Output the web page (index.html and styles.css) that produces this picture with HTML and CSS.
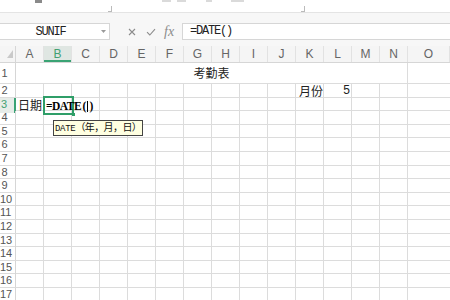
FILE: index.html
```html
<!DOCTYPE html>
<html lang="zh-CN">
<head>
    <meta charset="UTF-8">
    <title>考勤表 - 表格</title>
    <link rel="stylesheet" href="styles.css">
</head>
<body>
    <!-- bottom edge of the ribbon, mostly cut off -->
    <div class="ribbon">
        <span class="rb-mark m1"></span>
        <span class="rb-corner c1"></span>
        <span class="rb-block g1"></span>
        <span class="rb-block g2"></span>
        <span class="rb-block g3"></span>
        <span class="rb-block g4"></span>
        <span class="rb-corner c2"></span>
    </div>

    <div class="formula-bar">
        <div class="name-box">
            <span class="name-text">SUNIF</span>
            <svg class="caret" width="5" height="3" viewBox="0 0 5 3"><path d="M0 0H5L2.5 3Z" fill="#9a9a9a"/></svg>
        </div>
        <div class="fx-icons">
            <svg class="ic-x" width="8" height="8" viewBox="0 0 8 8"><path d="M1 1L7 7M7 1L1 7" stroke="#8c8c8c" stroke-width="1.1" fill="none"/></svg>
            <svg class="ic-ok" width="10" height="8" viewBox="0 0 10 8"><path d="M1 4.2L3.8 7L9 1.2" stroke="#8c8c8c" stroke-width="1.1" fill="none"/></svg>
            <span class="fx">fx</span>
        </div>
        <div class="formula-input">=DATE()</div>
    </div>

    <div class="sheet">
        <div class="col-header">
            <div class="ch corner">
                <svg width="6" height="8" viewBox="0 0 6 8"><path d="M6 0V8H0Z" fill="#c9c9c9"/></svg>
            </div>
            <div class="ch">A</div>
            <div class="ch sel">B</div>
            <div class="ch">C</div>
            <div class="ch">D</div>
            <div class="ch">E</div>
            <div class="ch">F</div>
            <div class="ch">G</div>
            <div class="ch">H</div>
            <div class="ch">I</div>
            <div class="ch">J</div>
            <div class="ch">K</div>
            <div class="ch">L</div>
            <div class="ch">M</div>
            <div class="ch">N</div>
            <div class="ch">O</div>
        </div>

        <div class="row r1">
            <div class="rh">1</div>
            <div class="merged">考勤表</div>
        </div>
        <div class="row">
            <div class="rh">2</div>
            <div class="cell col-k">月份</div>
            <div class="cell col-l num">5</div>
        </div>
        <div class="row">
            <div class="rh active">3</div>
            <div class="cell col-a">日期</div>
            <div class="cell col-b editing">
                <span class="edit-text">=DATE <span class="paren">(<span class="cursor"></span>)</span></span>
                <span class="handle"></span>
                <div class="tip"><span class="tip-fn">DATE</span>（年，月，日）</div>
            </div>
        </div>
        <div class="row"><div class="rh">4</div></div>
        <div class="row"><div class="rh">5</div></div>
        <div class="row"><div class="rh">6</div></div>
        <div class="row"><div class="rh">7</div></div>
        <div class="row"><div class="rh">8</div></div>
        <div class="row"><div class="rh">9</div></div>
        <div class="row"><div class="rh">10</div></div>
        <div class="row"><div class="rh">11</div></div>
        <div class="row"><div class="rh">12</div></div>
        <div class="row"><div class="rh">13</div></div>
        <div class="row"><div class="rh">14</div></div>
        <div class="row"><div class="rh">15</div></div>
        <div class="row"><div class="rh">16</div></div>
        <div class="row"><div class="rh">17</div></div>
    </div>
</body>
</html>
```

FILE: styles.css
```css
body{
    margin: 0;
    width: 450px;
    height: 300px;
    overflow: hidden;
    background: #fff;
    font-family: "Liberation Sans", "Noto Sans CJK SC", sans-serif;
    color: #222;
}

/* ribbon strip */
.ribbon{
    display: flex;
    align-items: flex-start;
    height: 12px;
    border-bottom: 1px solid #e4e4e4;
}
.rb-mark{
    height: 3px;
    background: #8a8a8a;
}
.m1{ margin-left: 35px; width: 7px; }
.rb-corner{
    margin-top: 6px;
    width: 3px;
    height: 5px;
    border-right: 1px solid #bbb;
    border-bottom: 1px solid #bbb;
}
.c1{ margin-left: 66px; }
.c2{ margin-left: 57px; }
.rb-block{
    height: 2px;
    background: #dadada;
}
.g1{ margin-left: 50px; width: 9px; }
.g2{ margin-left: 6px; width: 9px; }
.g3{ margin-left: 20px; width: 6px; }
.g4{ margin-left: 19px; width: 13px; }

/* name box + formula */
.formula-bar{
    display: flex;
    height: 17px;
    padding: 10px 0 6px 0;
    background: #f7f7f7;
}
.name-box{
    display: flex;
    align-items: center;
    width: 111px;
    margin-left: -1px;
    box-sizing: border-box;
    background: #fff;
    border: 1px solid #d6d6d6;
}
.name-text{
    flex: 1;
    text-align: center;
    font-family: "Liberation Mono", monospace;
    font-size: 12px;
    letter-spacing: -1.2px;
    color: #222;
}
.caret{
    margin-right: 3px;
}
.fx-icons{
    display: flex;
    align-items: center;
    width: 72px;
}
.ic-x{ margin-left: 18px; }
.ic-ok{ margin-left: 10px; }
.fx{
    margin-left: 8px;
    font-family: "Liberation Serif", serif;
    font-style: italic;
    font-size: 14px;
    color: #8c8c8c;
    line-height: 14px;
}
.formula-input{
    flex: 1;
    box-sizing: border-box;
    background: #fff;
    border: 1px solid #d6d6d6;
    border-right: none;
    padding-left: 7px;
    font-family: "Liberation Mono", monospace;
    font-size: 12px;
    letter-spacing: -1.2px;
    line-height: 15px;
}

/* grid */
.col-header,
.row{
    display: grid;
    grid-template-columns: 16px repeat(14, 28px) 1fr;
    box-sizing: border-box;
}
.col-header{
    height: 17px;
    background: #f5f5f5;
    border-bottom: 1px solid #d6d6d6;
}
.ch{
    border-right: 1px solid #e2e2e2;
    text-align: center;
    font-size: 12px;
    line-height: 16px;
    color: #666;
}
.ch.corner{
    display: flex;
    justify-content: flex-end;
    align-items: flex-end;
    padding: 0 2px 4px 0;
    border-right: 1px solid #d6d6d6;
}
.ch.sel{
    background: #dfe6e2;
    color: #43a072;
    box-shadow: inset 0 -2px 0 #3aa374;
}

.row{
    height: 13.6px;
    border-bottom: 1px solid #dcdcdc;
    background-image: repeating-linear-gradient(to right, transparent 0 27px, #dcdcdc 27px 28px);
    background-size: 392px 100%;
    background-position: 16px 0;
    background-repeat: no-repeat;
    font-size: 12px;
    line-height: 13px;
}
.row.r1{
    height: 21px;
    line-height: 20px;
}
.rh{
    grid-column: 1;
    box-sizing: border-box;
    border-right: 1px solid #d6d6d6;
    padding-right: 6px;
    text-align: center;
    font-size: 11px;
    color: #555;
    white-space: nowrap;
}
.rh.active{
    background: #e6ece8;
    color: #43a072;
    border-right: 2px solid #3aa374;
}
.merged{
    grid-column: 2 / 16;
    background: #fff;
    border-right: 1px solid #dcdcdc;
    text-align: center;
    font-family: "Noto Sans CJK SC", sans-serif;
}
.cell{
    white-space: nowrap;
    font-family: "Noto Sans CJK SC", sans-serif;
}
.col-a{ grid-column: 2; padding-left: 2px; }
.col-b{ grid-column: 3; }
.col-k{ grid-column: 12; padding-left: 3px; }
.col-l{ grid-column: 13; }
.num{
    text-align: right;
    padding-right: 2px;
    font-family: "Liberation Sans", sans-serif;
}

/* cell being edited */
.editing{
    position: relative;
}
.editing::after{
    content: "";
    position: absolute;
    top: -2px;
    left: -1px;
    right: -2px;
    bottom: -2px;
    border: 2px solid #2f9e68;
}
.edit-text{
    position: relative;
    z-index: 1;
    padding-left: 2px;
    font-family: "Liberation Serif", serif;
    font-weight: bold;
    font-size: 11.5px;
    letter-spacing: -0.5px;
    color: #000;
}
.paren{
    letter-spacing: 0;
    margin-left: -1px;
}
.cursor{
    display: inline-block;
    width: 1px;
    height: 11px;
    margin: 0 1px;
    vertical-align: -2px;
    background: #000;
}
.handle{
    position: absolute;
    right: -3px;
    bottom: -3px;
    width: 3px;
    height: 3px;
    background: #2f9e68;
    z-index: 2;
}
.tip{
    position: absolute;
    left: 9px;
    top: 22px;
    z-index: 3;
    padding: 0 1px;
    background: #ffffe1;
    border: 1px solid #444;
    font-family: "Noto Sans CJK SC", sans-serif;
    font-size: 10px;
    letter-spacing: -0.6px;
    line-height: 12px;
    color: #111;
}
.tip-fn{
    font-family: "Liberation Mono", monospace;
    font-size: 9px;
    letter-spacing: -0.3px;
}
```
